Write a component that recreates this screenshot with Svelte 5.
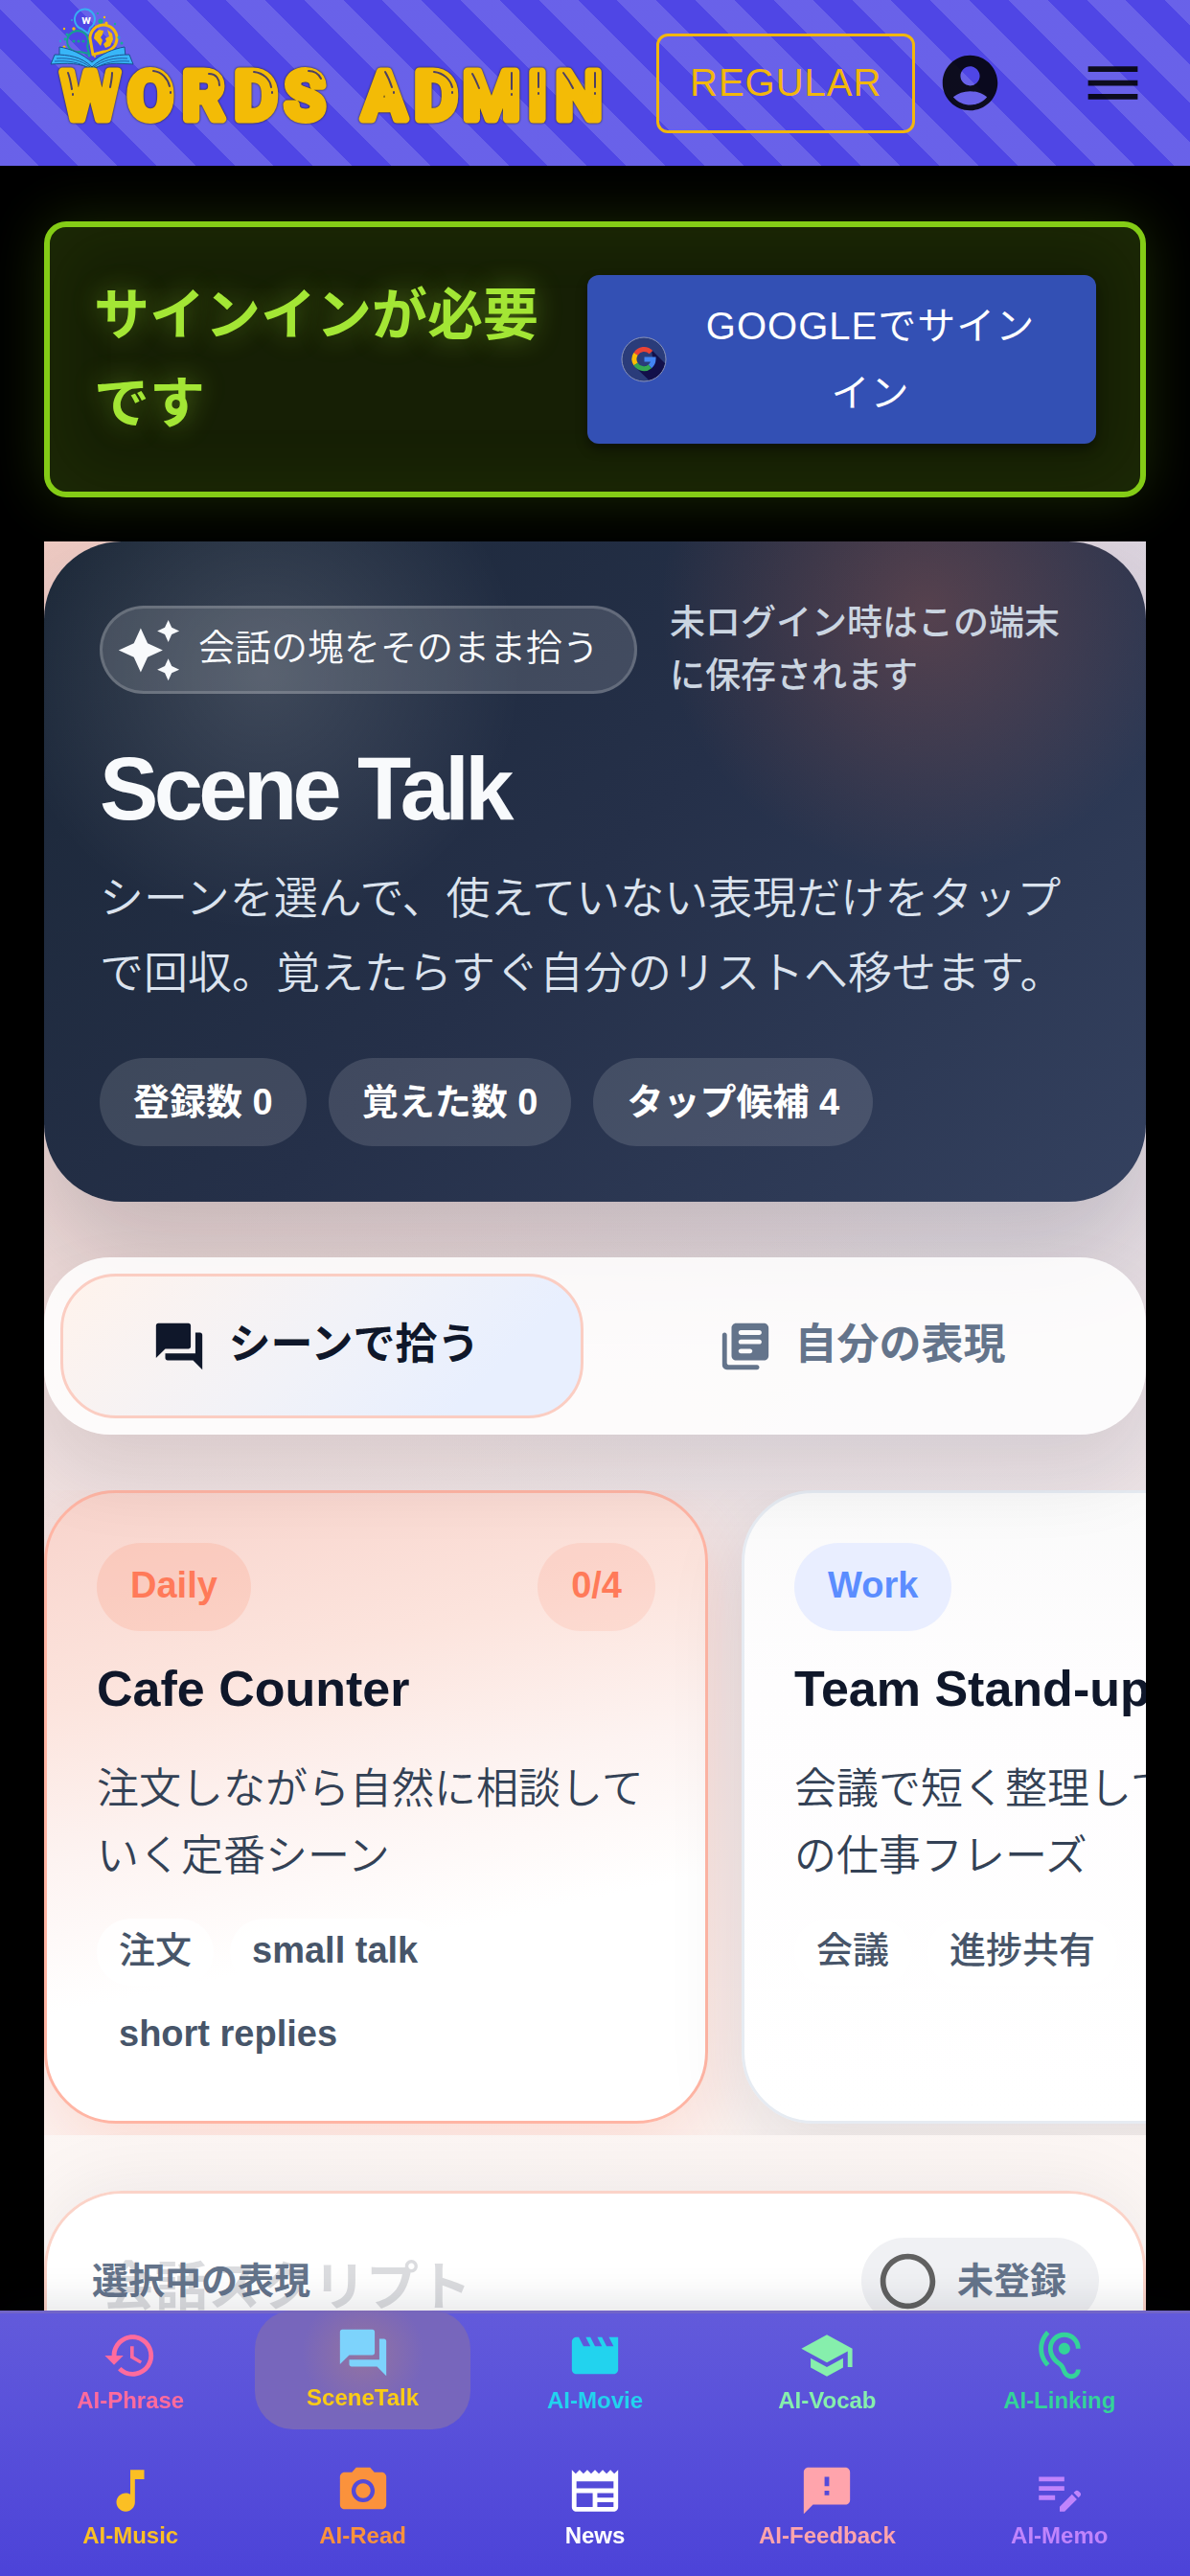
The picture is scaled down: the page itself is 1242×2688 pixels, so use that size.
<script>
  const paths = {
    account: 'M12 2C6.48 2 2 6.48 2 12s4.48 10 10 10 10-4.48 10-10S17.52 2 12 2zm0 4c1.93 0 3.5 1.57 3.5 3.5S13.93 13 12 13s-3.5-1.57-3.5-3.5S10.07 6 12 6zm0 14c-2.03 0-4.43-.82-6.14-2.88C7.55 15.8 9.68 15 12 15s4.45.8 6.14 2.12C16.43 19.18 14.03 20 12 20z',
    menu: 'M3 18h18v-2H3v2zm0-5h18v-2H3v2zm0-7v2h18V6H3z',
    sparkle: 'm19 9 1.25-2.75L23 5l-2.75-1.25L19 1l-1.25 2.75L15 5l2.75 1.25L19 9zm-7.5.5L9 4 6.5 9.5 1 12l5.5 2.5L9 20l2.5-5.5L17 12l-5.5-2.5zM19 15l-1.25 2.75L15 19l2.75 1.25L19 23l1.25-2.75L23 19l-2.75-1.25L19 15z',
    chat: 'M21 6h-2v9H6v2c0 .55.45 1 1 1h11l4 4V7c0-.55-.45-1-1-1zm-4 6V3c0-.55-.45-1-1-1H3c-.55 0-1 .45-1 1v14l4-4h10c.55 0 1-.45 1-1z',
    books: 'M3 6c-.55 0-1 .45-1 1v13c0 1.1.9 2 2 2h13c.55 0 1-.45 1-1s-.45-1-1-1H5c-.55 0-1-.45-1-1V7c0-.55-.45-1-1-1zm17-4H8c-1.1 0-2 .9-2 2v12c0 1.1.9 2 2 2h12c1.1 0 2-.9 2-2V4c0-1.1-.9-2-2-2zm-2 9h-8c-.55 0-1-.45-1-1s.45-1 1-1h8c.55 0 1 .45 1 1s-.45 1-1 1zm-4 4h-4c-.55 0-1-.45-1-1s.45-1 1-1h4c.55 0 1 .45 1 1s-.45 1-1 1zm4-8h-8c-.55 0-1-.45-1-1s.45-1 1-1h8c.55 0 1 .45 1 1s-.45 1-1 1z',
    ring: 'M12 2C6.48 2 2 6.48 2 12s4.48 10 10 10 10-4.48 10-10S17.52 2 12 2zm0 18c-4.42 0-8-3.58-8-8s3.58-8 8-8 8 3.58 8 8-3.58 8-8 8z',
    history: 'M13 3c-4.97 0-9 4.03-9 9H1l3.89 3.89.07.14L9 12H6c0-3.87 3.13-7 7-7s7 3.13 7 7-3.13 7-7 7c-1.93 0-3.68-.79-4.94-2.06l-1.42 1.42C8.27 19.99 10.51 21 13 21c4.97 0 9-4.03 9-9s-4.03-9-9-9zm-1 5v5l4.28 2.54.72-1.21-3.5-2.08V8H12z',
    movie: 'm18 4 2 4h-3l-2-4h-2l2 4h-3l-2-4H8l2 4H7L5 4H4c-1.1 0-1.99.9-1.99 2L2 18c0 1.1.9 2 2 2h16c1.1 0 2-.9 2-2V4h-4z',
    school: 'M5 13.18v4L12 21l7-3.82v-4L12 17l-7-3.82zM12 3 1 9l11 6 9-4.91V17h2V9L12 3z',
    hearing: 'M17 20c-.29 0-.56-.06-.76-.15-.71-.37-1.21-.88-1.71-2.38-.51-1.56-1.47-2.29-2.39-3-.79-.61-1.61-1.24-2.32-2.53C9.29 10.98 9 9.93 9 9c0-2.8 2.2-5 5-5s5 2.2 5 5h2c0-3.93-3.07-7-7-7S7 5.07 7 9c0 1.26.38 2.65 1.07 3.9.91 1.65 1.98 2.48 2.85 3.15.81.62 1.39 1.07 1.71 2.05.6 1.82 1.37 2.84 2.73 3.55.51.23 1.07.35 1.64.35 2.21 0 4-1.79 4-4h-2c0 1.1-.9 2-2 2zM7.64 2.64 6.22 1.22C4.23 3.21 3 5.96 3 9s1.23 5.79 3.22 7.78l1.41-1.41C6.01 13.74 5 11.49 5 9s1.01-4.74 2.64-6.36zM11.5 9c0 1.38 1.12 2.5 2.5 2.5s2.5-1.12 2.5-2.5-1.12-2.5-2.5-2.5-2.5 1.12-2.5 2.5z',
    music: 'M12 3v10.55c-.59-.34-1.27-.55-2-.55-2.21 0-4 1.79-4 4s1.79 4 4 4 4-1.79 4-4V7h4V3h-6z',
    camera: 'M12 8.8a3.2 3.2 0 1 0 0 6.4 3.2 3.2 0 0 0 0-6.4zM9 2 7.17 4H4c-1.1 0-2 .9-2 2v12c0 1.1.9 2 2 2h16c1.1 0 2-.9 2-2V6c0-1.1-.9-2-2-2h-3.17L15 2H9zm3 15c-2.76 0-5-2.24-5-5s2.24-5 5-5 5 2.24 5 5-2.24 5-5 5z',
    news: 'm22 3-1.67 1.67L18.67 3 17 4.67 15.33 3l-1.66 1.67L12 3l-1.67 1.67L8.67 3 7 4.67 5.33 3 3.67 4.67 2 3v16c0 1.1.9 2 2 2h16c1.1 0 2-.9 2-2V3zM11 19H4v-6h7v6zm9 0h-7v-2h7v2zm0-4h-7v-2h7v2zm0-4H4V8h16v3z',
    feedback: 'M20 2H4c-1.1 0-1.99.9-1.99 2L2 22l4-4h14c1.1 0 2-.9 2-2V4c0-1.1-.9-2-2-2zm-7 12h-2v-2h2v2zm0-4h-2V6h2v4z',
    memo: 'M3 10h11v2H3v-2zm0-2h11V6H3v2zm0 8h7v-2H3v2zm15.01-3.13.71-.71c.39-.39 1.02-.39 1.41 0l.71.71c.39.39.39 1.02 0 1.41l-.71.71-2.12-2.12zm-.71.71-5.3 5.3V21h2.12l5.3-5.3-2.12-2.12z'
  };

  const stats = ['登録数 0', '覚えた数 0', 'タップ候補 4'];

  let tab = $state('scene');
  let selected = $state('cafe');

  const tabs = [
    { id: 'scene', icon: 'chat', label: 'シーンで拾う' },
    { id: 'mine', icon: 'books', label: '自分の表現' }
  ];

  const scenes = [
    {
      id: 'cafe', tone: 'coral', kind: 'Daily', count: '0/4', title: 'Cafe Counter',
      text: '注文しながら自然に相談していく定番シーン',
      tags: ['注文', 'small talk', 'short replies']
    },
    {
      id: 'team', tone: 'blue', kind: 'Work', count: '0/4', title: 'Team Stand-up',
      text: '会議で短く整理して話すときの仕事フレーズ',
      tags: ['会議', '進捗共有']
    }
  ];

  const isLatin = (s) => /^[a-z]/i.test(s);

  const nav = [
    { icon: 'history', label: 'AI-Phrase', tone: 'pink' },
    { icon: 'chat', label: 'SceneTalk', tone: 'sky', active: true },
    { icon: 'movie', label: 'AI-Movie', tone: 'cyan' },
    { icon: 'school', label: 'AI-Vocab', tone: 'mint' },
    { icon: 'hearing', label: 'AI-Linking', tone: 'green' },
    { icon: 'music', label: 'AI-Music', tone: 'amber' },
    { icon: 'camera', label: 'AI-Read', tone: 'orange' },
    { icon: 'news', label: 'News', tone: 'white' },
    { icon: 'feedback', label: 'AI-Feedback', tone: 'rose' },
    { icon: 'memo', label: 'AI-Memo', tone: 'violet' }
  ];

  const dots = [
    [105, 22, 2.6, '#16a99a'], [111, 24, 1.6, '#f3bb0a'], [109, 18, 1.2, '#f3bb0a'], [102, 14, 1.1, '#16a99a'],
    [120, 25, 1.2, '#16a99a'], [75, 21, 1.1, '#2a9fd8'], [77, 30, 1.7, '#f3bb0a'], [67, 30, 1.2, '#f3bb0a'],
    [70, 36, 1.5, '#16a99a'], [63, 43, 1.2, '#2a9fd8'], [68, 41, 1.4, '#16a99a'], [67, 49, 1.6, '#f3bb0a'],
    [124, 39, 1.6, '#2a9fd8'], [127, 45, 1.5, '#16a99a'], [93, 58, 1.5, '#16a99a'], [99, 59, 1.1, '#f3bb0a'],
    [96, 64, 1, '#16a99a']
  ];
</script>

{#snippet icon(name)}
  <svg class="icon" viewBox="0 0 24 24" aria-hidden="true"><path d={paths[name]} /></svg>
{/snippet}

<div class="page">
  <header class="bar">
    <a class="brand" href="#home" aria-label="Words Admin">
      <svg viewBox="46 0 600 173" width="600" height="173">
        <g fill="none" stroke-linejoin="round">
          <path d="M92 35L85 30A10.500 10.500 0 1 1 94 29Z" stroke="#38aef2" stroke-width="2" />
          <path d="M93 56L83 54A11 11 0 1 1 91 48Z" stroke="#14a090" stroke-width="2" />
          <path d="M97 57L94 40A14 14 0 1 1 108 54Z" stroke="#f3b90b" stroke-width="3" />
        </g>
        <text class="tiny" x="90" y="25" text-anchor="middle">w</text>
        <g fill="#14a090"><circle cx="77" cy="43" r="1.6" /><circle cx="82" cy="43" r="1.6" /><circle cx="87" cy="43" r="1.6" /></g>
        <path d="M99 35l4-4 5 1-1 4-2 3 2 3-2 6-4-5-3-3zM112 31l5 4 1 6-3 7-5 2-2-4 3-3-1-3 4-2z" fill="#f3b90b" />
        {#each dots as [cx, cy, r, fill]}
          <circle {cx} {cy} {r} {fill} />
        {/each}
        <g fill="#38b6f8" stroke="#1c4f8f" stroke-width="1">
          <path d="M62 49c12 2 24 7 34 16 10-9 22-14 34-16l1 10-35 12-34-12z" />
          <path d="M57 57c14 0 28 2 39 13 11-11 25-13 39-13l4 10c-16-1-32-2-43 6-11-8-27-7-43-6z" />
          <path d="M59 61c14-1 26 2 35 9M57 64c14-1 26 1 35 7M133 61c-14-1-26 2-35 9M135 64c-14-1-26 1-35 7" fill="none" stroke="#1d5fa6" />
        </g>
        <text class="wordmark" y="124" x="94 157 212 267 318 360 401 455 513 561 604" text-anchor="middle">WORDS ADMIN</text>
        <g fill="none" stroke="#4d4063" stroke-width="2" stroke-linecap="round">
          <path d="M71 76c2 5 3 11 4 17M76 98v1M117 76c0 5-1 10-2 15" />
          <path d="M160 74c9 1 15 8 17 16M178 96v1M218 77c8 0 11 6 11 12" />
          <path d="M265 75c10 1 17 8 18 16M284 96v1M322 74c7 0 11 4 13 8" />
          <path d="M402 75c3 5 5 10 7 16M411 96v1M453 75c10 1 17 8 19 16M472 96v1" />
          <path d="M493 77c3 5 5 10 7 15M534 76v17M534 98v1M562 76v15M562 97v1" />
          <path d="M588 76c4 5 7 10 10 16M621 76v15M621 97v1" />
        </g>
      </svg>
    </a>
    <button class="plan" type="button">REGULAR</button>
    <button class="icon-btn" type="button" aria-label="アカウント">{@render icon('account')}</button>
    <button class="icon-btn last" type="button" aria-label="メニュー">{@render icon('menu')}</button>
  </header>

  <main>
    <section class="signin">
      <h2>サインインが必要です</h2>
      <button type="button">
        <svg viewBox="0 0 48 48" width="48" height="48" aria-hidden="true">
          <defs><clipPath id="disc"><circle cx="24" cy="24" r="23" /></clipPath></defs>
          <circle cx="24" cy="24" r="23" fill="#2a3c7a" />
          <path d="M32 14l22 22v18H38L16 33l18-4z" fill="#12104a" clip-path="url(#disc)" />
          <circle cx="24" cy="24" r="23" fill="none" stroke="#8a93b8" stroke-width="1" />
          <g fill="none" stroke-width="5">
            <path d="M31.4 16.6A10 10 0 0 0 15.5 18.4" stroke="#ea4335" />
            <path d="M15.5 18.4A10 10 0 0 0 15.5 29" stroke="#fbbc05" />
            <path d="M15.5 29A10 10 0 0 0 30.5 31.3" stroke="#34a853" />
            <path d="M30.5 31.3A10 10 0 0 0 34 24H24.500" stroke="#4285f4" />
          </g>
        </svg>
        <span>GOOGLEでサインイン</span>
      </button>
    </section>

    <div class="scene-page">
      <section class="hero">
        <div class="hero-top">
          <span class="hero-chip">{@render icon('sparkle')}<span>会話の塊をそのまま拾う</span></span>
          <p class="note">未ログイン時はこの端末に保存されます</p>
        </div>
        <h1>Scene Talk</h1>
        <p class="lead">シーンを選んで、使えていない表現だけをタップで回収。覚えたらすぐ自分のリストへ移せます。</p>
        <ul class="stats">
          {#each stats as s}<li>{s}</li>{/each}
        </ul>
      </section>

      <div class="tabs" role="tablist">
        {#each tabs as t}
          <button type="button" role="tab" aria-selected={tab === t.id} class:on={tab === t.id} onclick={() => (tab = t.id)}>
            {@render icon(t.icon)}<span>{t.label}</span>
          </button>
        {/each}
      </div>

      <div class="strip">
        {#each scenes as s}
          <button type="button" class="card {s.tone}" class:on={selected === s.id} onclick={() => (selected = s.id)}>
            <span class="card-top"><span class="pill">{s.kind}</span><span class="pill soft">{s.count}</span></span>
            <span class="card-title">{s.title}</span>
            <span class="card-text">{s.text}</span>
            <span class="tags">
              {#each s.tags as tag}<span class="tag" class:latin={isLatin(tag)}>{tag}</span>{/each}
            </span>
          </button>
        {/each}
      </div>

      <section class="script">
        <h2>会話スクリプト</h2>
        <div class="picked">
          <span class="picked-label">選択中の表現</span>
          <span class="state">{@render icon('ring')}未登録</span>
        </div>
      </section>
    </div>
  </main>

  <nav class="dock">
    {#each nav as n}
      <a href="#{n.label}" class="dock-item {n.tone}" class:active={n.active}>
        {@render icon(n.icon)}<span>{n.label}</span>
      </a>
    {/each}
  </nav>
</div>

<style>
  :global(body) {
    background: #000;
  }

  .page {
    height: 100vh;
    overflow: hidden;
    background: #000;
    color: #0f172a;
    font-family: "Liberation Sans", "Noto Sans CJK JP", sans-serif;
  }

  h1, h2, p, ul {
    margin: 0;
    padding: 0;
  }

  button {
    margin: 0;
    border: 0;
    padding: 0;
    background: none;
    color: inherit;
    font: inherit;
    cursor: pointer;
  }

  a {
    text-decoration: none;
  }

  .icon {
    width: 58px;
    height: 58px;
    flex: none;
    fill: currentColor;
  }

  /* header */
  .bar {
    --stripe: calc(100vw / 43);
    display: flex;
    align-items: center;
    height: 173px;
    padding: 0 46px;
    background-color: #4f46e5;
    background-image: repeating-linear-gradient(
      45deg,
      rgba(255, 255, 255, 0.15) 0,
      rgba(255, 255, 255, 0.15) var(--stripe),
      transparent var(--stripe),
      transparent calc(var(--stripe) * 2)
    );
  }

  .brand {
    display: block;
    height: 173px;
    margin-right: 39px;
  }

  .wordmark {
    font: 500 68px Roboto, sans-serif;
    fill: #f3bb06;
    stroke: #f3bb06;
    stroke-width: 9px;
    stroke-linejoin: round;
    stroke-linecap: round;
    filter: drop-shadow(0 0 1px #2a2410);
  }

  .tiny {
    font: 700 13px Roboto, sans-serif;
    fill: #fff;
  }

  .plan {
    height: 104px;
    padding: 0 32px;
    border: 3px solid #f2b70c;
    border-radius: 12px;
    color: #f2b70c;
    font-size: 40px;
    letter-spacing: 1px;
    margin-right: 23px;
  }

  .icon-btn {
    display: flex;
    color: rgba(0, 0, 0, 0.87);
  }

  .icon-btn .icon {
    width: 69px;
    height: 69px;
  }

  .last {
    margin-left: auto;
  }

  main {
    padding: 58px 46px 0;
  }

  /* sign-in banner */
  .signin {
    display: flex;
    align-items: center;
    justify-content: space-between;
    gap: 20px;
    padding: 46px;
    border: 6px solid #84cc16;
    border-radius: 23px;
    background: #161f05;
    box-shadow: 0 0 58px rgba(132, 204, 22, 0.2), inset 0 0 80px rgba(132, 204, 22, 0.08);
  }

  .signin h2 {
    flex: 1;
    color: #a3e635;
    font-size: 58px;
    line-height: 92px;
    text-shadow: 0 0 29px rgba(163, 230, 53, 0.4);
  }

  .signin button {
    display: flex;
    align-items: center;
    gap: 23px;
    width: 531px;
    padding: 18px 46px 18px 35px;
    box-sizing: border-box;
    border-radius: 12px;
    background: #3350b4;
    color: #fff;
    font-size: 40px;
    line-height: 70px;
    letter-spacing: 1px;
    box-shadow: 0 6px 12px rgba(0, 0, 0, 0.4);
  }

  .signin button svg {
    flex: none;
  }

  .signin button span {
    flex: 1;
  }

  /* scene page */
  .scene-page {
    display: flex;
    flex-direction: column;
    gap: 58px;
    margin-top: 46px;
    overflow: hidden;
    background:
      radial-gradient(circle at 0 0, rgba(255, 160, 130, 0.3), transparent 50%),
      radial-gradient(circle at 100% 0, rgba(170, 180, 230, 0.2), transparent 50%),
      linear-gradient(180deg, #e8dddf 0, #efe5e6 50%, #fffaf7 86%, #fff 100%);
  }

  .hero {
    position: relative;
    padding: 58px;
    border-radius: 81px;
    color: #f8fafc;
    background:
      radial-gradient(circle at 20% 20%, rgba(255, 255, 255, 0.14), transparent 25%),
      radial-gradient(circle at 80% 10%, rgba(255, 122, 89, 0.22), transparent 25%),
      linear-gradient(135deg, #1b2737 0%, #253049 50%, #34415f 100%);
    box-shadow: 0 58px 110px rgba(15, 23, 42, 0.18);
  }

  .hero-top {
    display: flex;
    align-items: center;
    gap: 34px;
  }

  .hero-chip {
    display: flex;
    align-items: center;
    gap: 17px;
    flex: none;
    height: 92px;
    padding: 0 37px 0 14px;
    box-sizing: border-box;
    border: 3px solid rgba(255, 255, 255, 0.18);
    border-radius: 46px;
    background: rgba(255, 255, 255, 0.14);
    font-size: 38px;
    font-weight: 350;
    line-height: 50px;
  }

  .hero-chip span,
  .tabs span {
    padding-bottom: 4px;
  }

  .hero-chip .icon {
    width: 69px;
    height: 69px;
  }

  .note {
    color: #cbd5e1;
    font-size: 37px;
    font-weight: 500;
    line-height: 55px;
  }

  h1 {
    margin-top: 40px;
    font-size: 92px;
    line-height: 100px;
    letter-spacing: -0.05em;
  }

  .lead {
    margin-top: 25px;
    color: #dbe3ee;
    font-size: 46px;
    font-weight: 350;
    line-height: 78px;
  }

  .stats {
    display: flex;
    flex-wrap: wrap;
    gap: 23px;
    margin-top: 50px;
    list-style: none;
  }

  .stats li {
    padding: 0 35px;
    border-radius: 46px;
    background: rgba(255, 255, 255, 0.13);
    color: #fff;
    font-size: 38px;
    font-weight: 700;
    line-height: 92px;
  }

  .tabs {
    display: grid;
    grid-template-columns: 1fr 1fr;
    gap: 24px;
    padding: 17px;
    border-radius: 69px;
    background: rgba(255, 255, 255, 0.86);
    box-shadow: 0 40px 80px rgba(15, 23, 42, 0.1);
    position: relative;
  }

  .tabs button {
    display: flex;
    align-items: center;
    justify-content: center;
    gap: 23px;
    height: 151px;
    padding-right: 14px;
    box-sizing: border-box;
    border: 3px solid transparent;
    border-radius: 58px;
    color: #64748b;
    font-size: 44px;
    font-weight: 700;
    line-height: 58px;
  }

  .tabs .on {
    border-color: #fbcdc2;
    background: linear-gradient(135deg, #fff3ec, #f1f2f8 50%, #e8effe 80%);
    color: #0f172a;
  }

  .strip {
    display: flex;
    gap: 35px;
    padding-bottom: 12px;
    overflow: hidden;
  }

  .card {
    display: flex;
    flex-direction: column;
    flex: none;
    width: 693px;
    min-height: 661px;
    padding: 52px;
    box-sizing: border-box;
    border: 3px solid #e6ebf2;
    border-radius: 75px;
    background: linear-gradient(180deg, #fafafa, #fefdfe 30%, #fff);
    box-shadow: 0 30px 80px rgba(15, 23, 42, 0.1);
    text-align: left;
  }

  .card.on {
    border-color: #ffb5a4;
    background: linear-gradient(168deg, #f8d3cb 0, #fce4dd 28%, #fdf3f1 48%, #fff 68%);
    box-shadow: 0 30px 80px rgba(255, 122, 89, 0.2);
  }

  .card-top {
    display: flex;
    justify-content: space-between;
  }

  .pill {
    padding: 0 35px 4px;
    border-radius: 46px;
    font-size: 38px;
    font-weight: 700;
    line-height: 88px;
  }

  .coral .pill {
    background: rgba(255, 122, 89, 0.16);
    color: #ff7a59;
  }

  .coral .soft {
    background: rgba(255, 122, 89, 0.13);
  }

  .blue .pill {
    background: #e9eeff;
    color: #5b8dff;
  }

  .card-title {
    margin-top: 28px;
    font-size: 52px;
    font-weight: 700;
    line-height: 64px;
  }

  .card-text {
    margin-top: 38px;
    color: #334155;
    font-size: 44px;
    font-weight: 350;
    line-height: 70px;
  }

  .tags {
    display: flex;
    flex-wrap: wrap;
    gap: 17px;
    margin-top: 30px;
  }

  .tag {
    padding: 0 23px 4px;
    border-radius: 35px;
    background: rgba(255, 255, 255, 0.8);
    color: #475569;
    font-size: 38px;
    font-weight: 500;
    line-height: 66px;
  }

  .tag.latin {
    font-weight: 700;
  }

  .script {
    position: relative;
    height: 400px;
    padding: 58px 61px;
    box-sizing: border-box;
    border-radius: 81px;
    background: #fff;
  }

  .script h2 {
    font-size: 55px;
    line-height: 84px;
  }

  /* floats above the script panel */
  .picked {
    position: absolute;
    inset: 0;
    display: flex;
    align-items: flex-start;
    justify-content: space-between;
    padding: 46px 46px 0 47px;
    border: 3px solid #fbd3c8;
    border-radius: 81px;
    background: rgba(255, 255, 255, 0.85);
    box-shadow: 0 0 80px rgba(15, 23, 42, 0.08);
    color: #64748b;
    font-size: 38px;
    font-weight: 700;
    line-height: 90px;
  }

  .state {
    display: flex;
    align-items: center;
    gap: 17px;
    padding: 0 34px 0 14px;
    border-radius: 46px;
    background: #f0f1f4;
  }

  .state .icon {
    width: 69px;
    height: 69px;
    color: #616161;
  }

  /* bottom dock */
  .dock {
    position: fixed;
    left: 0;
    right: 0;
    bottom: 0;
    display: grid;
    grid-template-columns: repeat(5, 1fr);
    row-gap: 17px;
    padding: 0 15px 9px;
    border-top: 3px solid #7265c8;
    background: linear-gradient(180deg, #625adb, #4c43d8);
    box-shadow: 0 -6px 40px rgba(15, 23, 42, 0.12);
  }

  .dock-item {
    display: flex;
    flex-direction: column;
    align-items: center;
    justify-content: center;
    height: 124px;
    margin: 0 9px;
    border-radius: 40px;
    font-size: 24px;
    font-weight: 700;
    line-height: 36px;
  }

  .active {
    transform: translateY(-3px);
    background:
      radial-gradient(circle at 50% 36%, rgba(200, 140, 110, 0.35), transparent 46%),
      #7766bc;
  }

  .pink { color: #ff6b9d; }
  .sky { color: #7dd3fc; }
  .sky span { color: #facc15; }
  .cyan { color: #22d3ee; }
  .mint { color: #86efac; }
  .green { color: #34d399; }
  .amber { color: #fbbf24; }
  .orange { color: #fb923c; }
  .white { color: #fff; }
  .rose { color: #ffa4ac; }
  .violet { color: #c084fc; }
</style>
